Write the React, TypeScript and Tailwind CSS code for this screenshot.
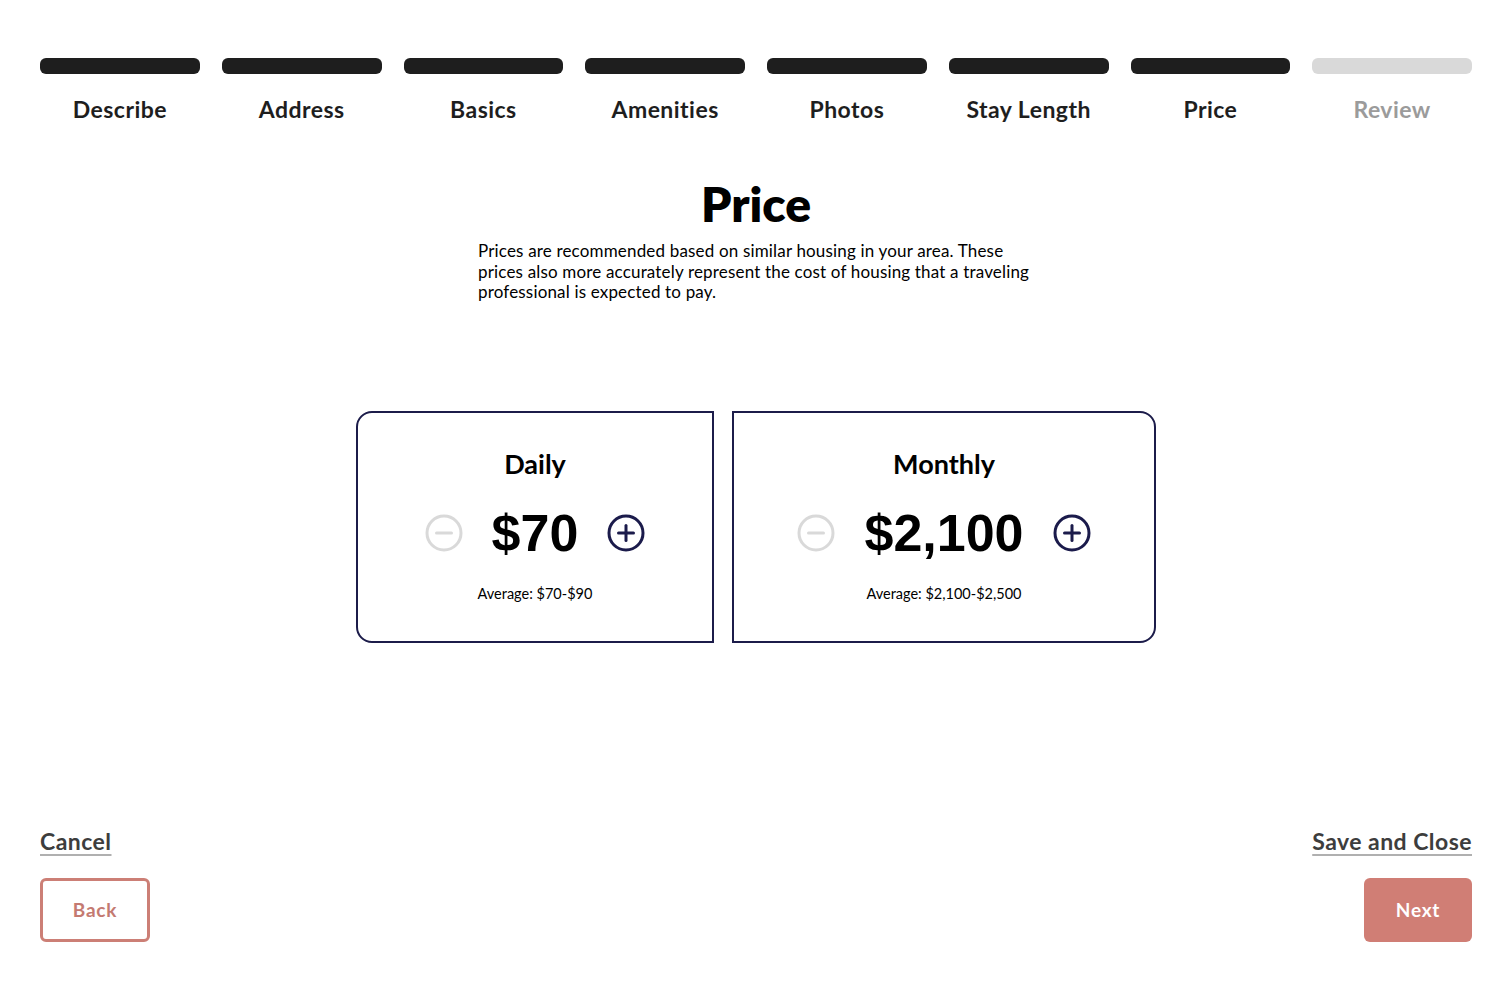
import { useState } from "react";

const steps = [
  { label: "Describe", done: true },
  { label: "Address", done: true },
  { label: "Basics", done: true },
  { label: "Amenities", done: true },
  { label: "Photos", done: true },
  { label: "Stay Length", done: true },
  { label: "Price", done: true },
  { label: "Review", done: false },
];

function MinusIcon() {
  return (
    <svg width="38" height="38" viewBox="0 0 38 38" fill="none">
      <circle cx="19" cy="19" r="17" stroke="#d9d9d9" strokeWidth="3" />
      <line x1="11.5" y1="19" x2="26.5" y2="19" stroke="#d9d9d9" strokeWidth="3" strokeLinecap="round" />
    </svg>
  );
}

function PlusIcon() {
  return (
    <svg width="38" height="38" viewBox="0 0 38 38" fill="none">
      <circle cx="19" cy="19" r="17" stroke="#1b1b4b" strokeWidth="3" />
      <line x1="11.5" y1="19" x2="26.5" y2="19" stroke="#1b1b4b" strokeWidth="3" strokeLinecap="round" />
      <line x1="19" y1="11.5" x2="19" y2="26.5" stroke="#1b1b4b" strokeWidth="3" strokeLinecap="round" />
    </svg>
  );
}

function fmt(n: number) {
  return "$" + n.toLocaleString("en-US");
}

function PriceCard({
  title,
  value,
  avg,
  className,
  onMinus,
  onPlus,
}: {
  title: string;
  value: number;
  avg: string;
  className: string;
  onMinus: () => void;
  onPlus: () => void;
}) {
  return (
    <div className={`flex h-[232px] flex-col items-center border-2 border-[#1c1c4a] pt-[35px] ${className}`}>
      <div className="text-[27px] leading-[32px] font-bold text-black">{title}</div>
      <div className="mt-[23px] flex h-[60px] items-center gap-[29px]">
        <button onClick={onMinus} className="h-[38px] w-[38px]">
          <MinusIcon />
        </button>
        <div className="text-[52px] leading-[60px] font-bold text-black" style={{ fontFamily: '"Liberation Sans", Arial, sans-serif' }}>
          {fmt(value)}
        </div>
        <button onClick={onPlus} className="h-[38px] w-[38px]">
          <PlusIcon />
        </button>
      </div>
      <div className="mt-[21px] text-[14.5px] leading-[20px] text-black">Average: {avg}</div>
    </div>
  );
}

export default function App() {
  const [daily, setDaily] = useState(70);
  const [monthly, setMonthly] = useState(2100);

  return (
    <div className="flex h-[982px] flex-col bg-white px-10 pt-[58px] pb-10 text-[#1e1e1e]" style={{ fontFamily: 'Lato, "Noto Sans", sans-serif' }}>
      {/* stepper */}
      <div className="grid grid-cols-8 gap-x-[22px]">
        {steps.map((s) => (
          <div key={s.label} className="flex flex-col items-center">
            <div className={`h-4 w-full rounded-[6px] ${s.done ? "bg-[#1e1e1e]" : "bg-[#d9d9d9]"}`} />
            <div className={`mt-[21px] text-[23px] leading-[28px] font-bold tracking-[0.02em] ${s.done ? "text-[#1e1e1e]" : "text-[#9b9b9b]"}`}>
              {s.label}
            </div>
          </div>
        ))}
      </div>

      {/* heading */}
      <h1 className="mt-[53px] text-center text-[48px] leading-[56px] font-extrabold text-black">Price</h1>
      <p className="mx-auto mt-[9px] w-[556px] text-[17px] leading-[20.5px] tracking-[0.01em] text-black">
        Prices are recommended based on similar housing in your area. These prices also more accurately represent the cost of
        housing that a traveling professional is expected to pay.
      </p>

      {/* cards */}
      <div className="mt-[108px] flex justify-center gap-[18px]">
        <PriceCard
          title="Daily"
          value={daily}
          avg="$70-$90"
          className="w-[358px] rounded-l-[16px]"
          onMinus={() => setDaily((d) => Math.max(0, d - 5))}
          onPlus={() => setDaily((d) => d + 5)}
        />
        <PriceCard
          title="Monthly"
          value={monthly}
          avg="$2,100-$2,500"
          className="w-[424px] rounded-r-[16px]"
          onMinus={() => setMonthly((m) => Math.max(0, m - 100))}
          onPlus={() => setMonthly((m) => m + 100)}
        />
      </div>

      {/* footer */}
      <div className="mt-auto flex items-end justify-between">
        <div className="flex flex-col items-start">
          <a className="text-[23px] leading-[28px] font-bold tracking-[0.02em] text-[#3d3d3d] underline decoration-[#b0b0b0] decoration-2 underline-offset-[4px]">
            Cancel
          </a>
          <button className="mt-[23px] h-16 w-[110px] rounded-[6px] border-[3px] border-[#cc7f76] text-[19px] font-bold tracking-[0.04em] text-[#c47a71]">
            Back
          </button>
        </div>
        <div className="flex flex-col items-end">
          <a className="text-[23px] leading-[28px] font-bold tracking-[0.02em] text-[#3d3d3d] underline decoration-[#b0b0b0] decoration-2 underline-offset-[4px]">
            Save and Close
          </a>
          <button className="mt-[23px] h-16 w-[108px] rounded-[6px] bg-[#d07e75] text-[19px] font-bold tracking-[0.04em] text-white">Next</button>
        </div>
      </div>
    </div>
  );
}
